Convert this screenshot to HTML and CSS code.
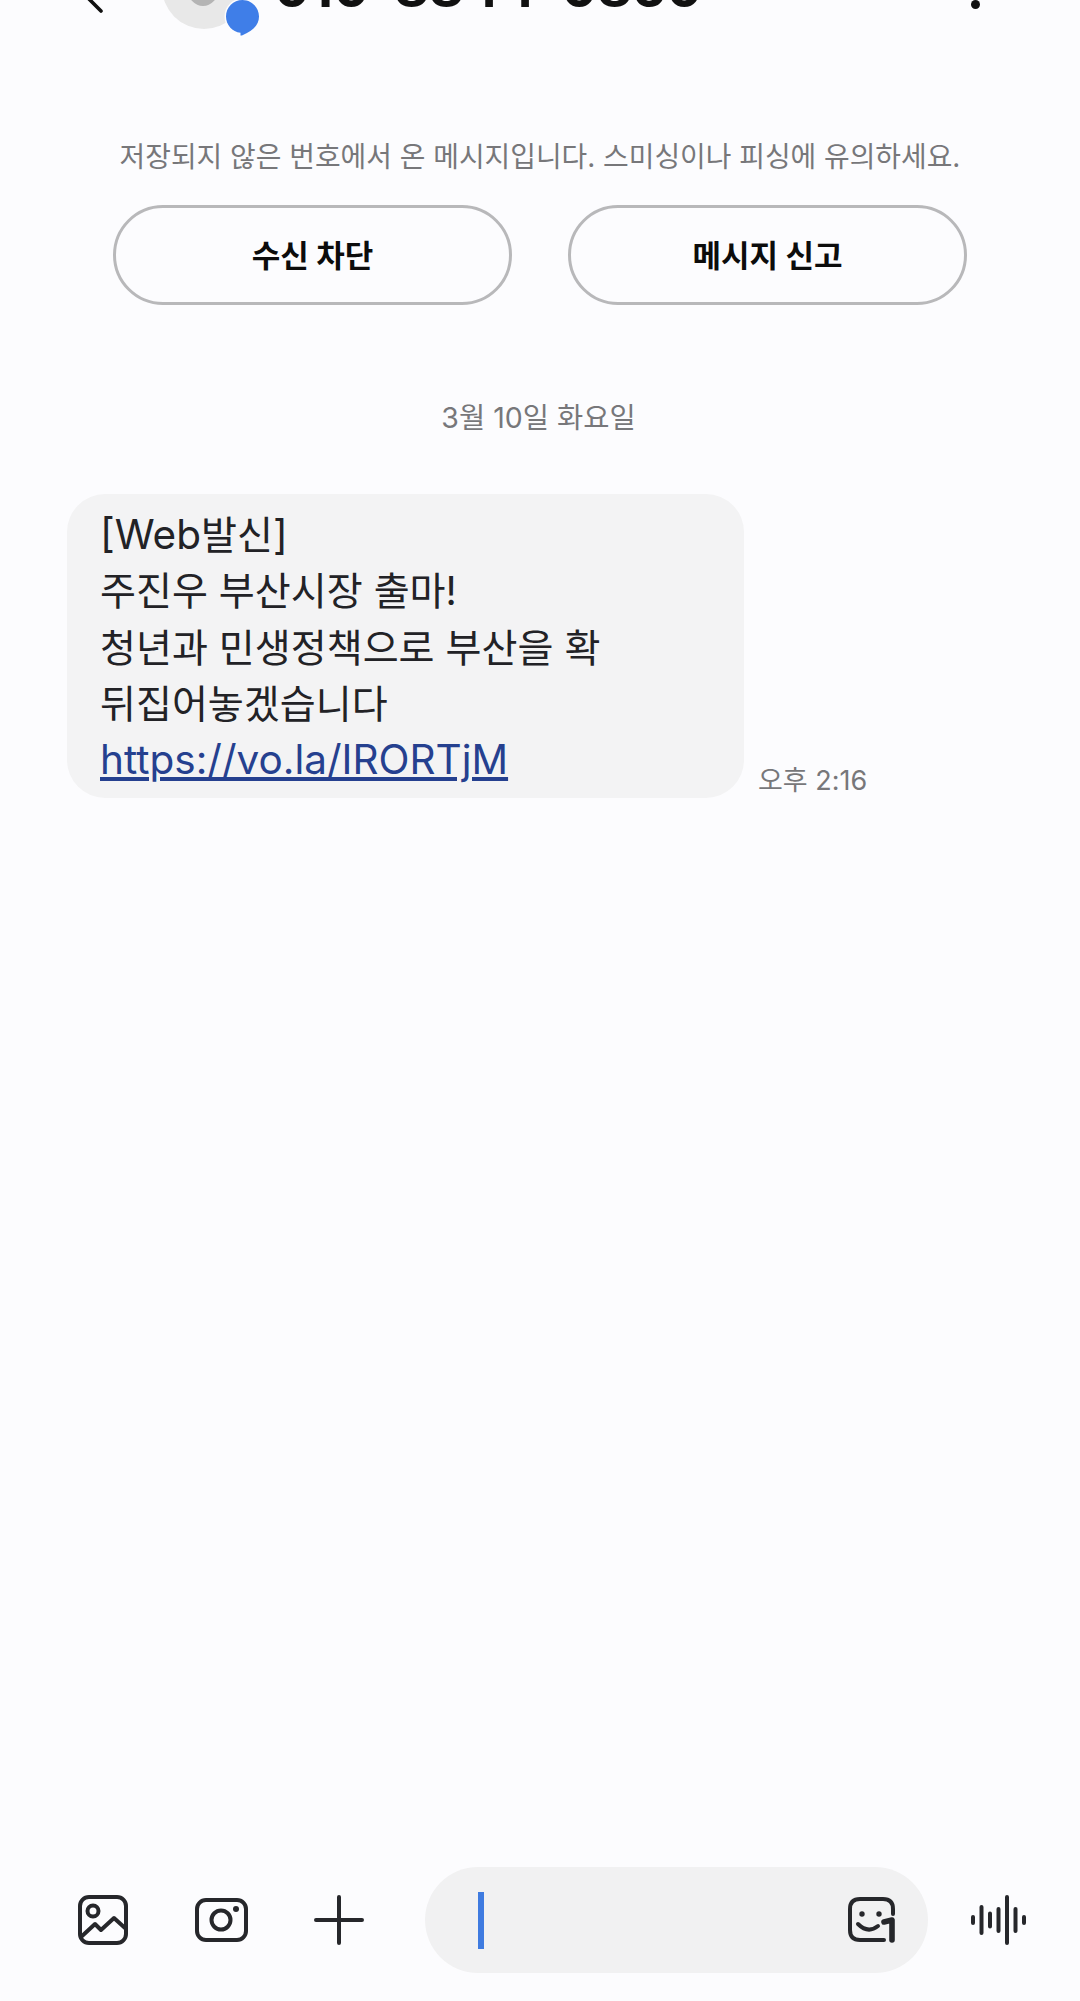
FILE: index.html
```html
<!DOCTYPE html>
<html lang="ko">
<head>
    <meta charset="UTF-8">
    <meta name="viewport" content="width=device-width, initial-scale=1.0">
    <title>메시지</title>
    <link rel="stylesheet" href="styles.css">
</head>
<body>
    <div class="screen">
        <header class="top-bar">
            <svg class="back-icon" width="28" height="28" viewBox="0 0 28 28">
                <path d="M26 26 L2 2" fill="none" stroke="#111" stroke-width="3.600" stroke-linecap="round"/>
            </svg>
            <div class="avatar">
                <span class="avatar-head"></span>
                <svg class="avatar-badge" width="39" height="42" viewBox="0 0 39 42">
                    <path d="M19.500 3 C28.600 3 36 10.400 36 19.500 C36 28 30 34 19 38.500 L17.500 38.500 L17.500 35.800 C9.300 34.800 3 27.800 3 19.500 C3 10.400 10.400 3 19.500 3 Z" fill="#3f7ee8" stroke="#fcfcfe" stroke-width="3" paint-order="stroke"/>
                </svg>
            </div>
            <div class="phone-number">010-8844-0850</div>
            <span class="menu-dot"></span>
        </header>

        <section class="notice">
            <p class="notice-text">저장되지 않은 번호에서 온 메시지입니다. 스미싱이나 피싱에 유의하세요.</p>
            <div class="notice-buttons">
                <button class="pill-button">수신 차단</button>
                <button class="pill-button">메시지 신고</button>
            </div>
        </section>

        <div class="date-label">3월 10일 화요일</div>

        <div class="message-row">
            <div class="bubble"><span class="latin">[Web</span>발신<span class="latin">]</span><br>주진우 부산시장 출마!<br>청년과 민생정책으로 부산을 확<br>뒤집어놓겠습니다<br><a class="link latin" href="#">https://vo.la/IRORTjM</a></div>
            <span class="time">오후 2:16</span>
        </div>

        <footer class="composer">
            <svg class="icon icon-gallery" width="50" height="50" viewBox="0 0 50 50" fill="none" stroke="#26272b" stroke-width="4" stroke-linecap="round" stroke-linejoin="round">
                <rect x="2" y="2" width="46" height="46" rx="9"/>
                <circle cx="15" cy="16" r="5.500"/>
                <path d="M3 42 L17 29 L23 35 L36 23 L47 33"/>
            </svg>
            <svg class="icon icon-camera" width="53" height="44" viewBox="0 0 53 44" fill="none" stroke="#26272b" stroke-width="4">
                <rect x="2" y="2" width="49" height="40" rx="9"/>
                <circle cx="26" cy="22" r="9.500"/>
                <circle cx="41" cy="11" r="3" fill="#26272b" stroke="none"/>
            </svg>
            <svg class="icon icon-plus" width="50" height="50" viewBox="0 0 50 50" fill="none" stroke="#26272b" stroke-width="4" stroke-linecap="round">
                <path d="M25 2 V48 M2 25 H48"/>
            </svg>
            <div class="input-pill">
                <span class="cursor"></span>
                <svg class="icon icon-sticker" width="50" height="46" viewBox="0 0 50 46" fill="none" stroke="#26272b" stroke-width="4" stroke-linecap="round" stroke-linejoin="round">
                    <path d="M36 43 H12 Q2 43 2 33 V12 Q2 2 12 2 H35 Q45 2 45 12 V17"/>
                    <path d="M10 27 Q20 37 30 29"/>
                    <circle cx="14" cy="17" r="2.700" fill="#26272b" stroke="none"/>
                    <circle cx="31" cy="17" r="2.700" fill="#26272b" stroke="none"/>
                    <path d="M36 25 L44 23 V43" stroke-width="5.600"/>
                </svg>
            </div>
            <svg class="icon icon-wave" width="55" height="50" viewBox="0 0 55 50" fill="none" stroke="#26272b" stroke-width="4" stroke-linecap="round">
                <path d="M2 22 V28 M10.500 12 V38 M19 18.500 V31.500 M27.500 14 V36 M36 2 V48 M44.500 14 V36 M53 22 V28"/>
            </svg>
        </footer>
    </div>
</body>
</html>
```

FILE: styles.css
```css
* {
    box-sizing: border-box;
}

body {
    margin: 0;
    background: #fcfcfe;
    font-family: 'Inter', 'Noto Sans CJK KR', sans-serif;
}

.screen {
    height: 2001px;
    overflow: hidden;
    display: flex;
    flex-direction: column;
}

.top-bar {
    flex: none;
    display: flex;
    align-items: center;
    height: 84px;
    margin-top: -55px;
    padding-left: 75px;
    padding-right: 100px;
}

.back-icon {
    flex: none;
    margin-top: 24px;
}

.avatar {
    flex: none;
    position: relative;
    width: 84px;
    height: 84px;
    margin-left: 59px;
    border-radius: 50%;
    background: #e8e8e8;
}

.avatar-head {
    position: absolute;
    left: 26px;
    bottom: 23px;
    width: 30px;
    height: 32px;
    border-radius: 50%;
    background: #b4b4b4;
}

.avatar-badge {
    position: absolute;
    left: 61px;
    bottom: -10px;
}

.phone-number {
    margin-left: 28px;
    font-size: 53.500px;
    font-weight: 700;
    color: #111;
    white-space: nowrap;
}

.menu-dot {
    flex: none;
    width: 9px;
    height: 9px;
    margin-left: auto;
    margin-top: 34px;
    border-radius: 50%;
    background: #111;
}

.notice {
    padding-top: 108px;
}

.notice-text {
    margin: 0;
    text-align: center;
    font-size: 27.900px;
    line-height: 40px;
    color: #77777a;
    white-space: nowrap;
}

.notice-buttons {
    display: flex;
    justify-content: space-between;
    margin-top: 28px;
    padding: 0 113px;
}

.pill-button {
    width: 399px;
    height: 100px;
    padding: 0 0 4px;
    background: transparent;
    border: 3px solid #b8b8ba;
    border-radius: 50px;
    font-family: inherit;
    font-size: 31px;
    font-weight: 700;
    color: #0c0c0c;
}

.date-label {
    margin-top: 93px;
    padding-right: 3px;
    text-align: center;
    font-size: 28.500px;
    line-height: 40px;
    color: #77777a;
}

.message-row {
    display: flex;
    align-items: flex-end;
    margin-top: 56px;
    padding-left: 67px;
}

.bubble {
    width: 677px;
    height: 304px;
    padding: 13px 33px;
    border-radius: 38px;
    background: #f3f3f4;
    font-size: 39.100px;
    line-height: 56.300px;
    color: #222226;
    white-space: nowrap;
}

.latin {
    font-size: 40.500px;
}

.link {
    color: #25408f;
    text-decoration: underline;
}

.time {
    margin-left: 14px;
    margin-bottom: -1px;
    font-size: 27px;
    line-height: 36px;
    color: #77777a;
}

.composer {
    display: flex;
    align-items: center;
    margin-top: auto;
    margin-bottom: 28px;
    padding-left: 78px;
}

.icon {
    flex: none;
}

.icon-camera {
    margin-left: 67px;
}

.icon-plus {
    margin-left: 66px;
}

.input-pill {
    flex: none;
    display: flex;
    align-items: center;
    justify-content: space-between;
    width: 503px;
    height: 106px;
    margin-left: 61px;
    padding-left: 53px;
    padding-right: 30px;
    border-radius: 53px;
    background: #f1f1f2;
}

.cursor {
    width: 6px;
    height: 57px;
    background: #3f7be0;
}

.icon-wave {
    margin-left: 43px;
}
```
